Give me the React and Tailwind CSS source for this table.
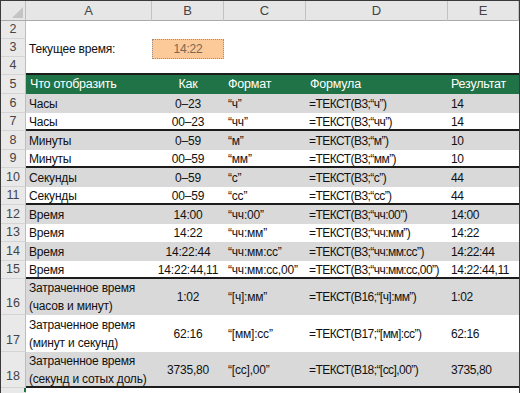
import React from "react";

const grid = "grid grid-cols-[126px_72px_82px_142px_71px]";

const rows = [
  { n: 6, a: "Часы", b: "0–23", c: "“ч”", d: "=ТЕКСТ(B3;“ч”)", e: "14", gray: true },
  { n: 7, a: "Часы", b: "00–23", c: "“чч”", d: "=ТЕКСТ(B3;“чч”)", e: "14", thick: true },
  { n: 8, a: "Минуты", b: "0–59", c: "“м”", d: "=ТЕКСТ(B3;“м”)", e: "10", gray: true },
  { n: 9, a: "Минуты", b: "00–59", c: "“мм”", d: "=ТЕКСТ(B3;“мм”)", e: "10", thick: true },
  { n: 10, a: "Секунды", b: "0–59", c: "“с”", d: "=ТЕКСТ(B3;“с”)", e: "44", gray: true },
  { n: 11, a: "Секунды", b: "00–59", c: "“сс”", d: "=ТЕКСТ(B3;“сс”)", e: "44", thick: true },
  { n: 12, a: "Время", b: "14:00", c: "“чч:00”", d: "=ТЕКСТ(B3;“чч:00”)", e: "14:00", gray: true },
  { n: 13, a: "Время", b: "14:22", c: "“чч:мм”", d: "=ТЕКСТ(B3;“чч:мм”)", e: "14:22" },
  { n: 14, a: "Время", b: "14:22:44", c: "“чч:мм:сс”", d: "=ТЕКСТ(B3;“чч:мм:сс”)", e: "14:22:44", gray: true },
  { n: 15, a: "Время", b: "14:22:44,11", c: "“чч:мм:сс,00”", d: "=ТЕКСТ(B3;“чч:мм:сс,00”)", e: "14:22:44,11", thick: true },
];

const tallRows = [
  { n: 16, a1: "Затраченное время", a2: "(часов и минут)", b: "1:02", c: "“[ч]:мм”", d: "=ТЕКСТ(B16;“[ч]:мм”)", e: "1:02", gray: true, h: "h-[36px]" },
  { n: 17, a1: "Затраченное время", a2: "(минут и секунд)", b: "62:16", c: "“[мм]:сс”", d: "=ТЕКСТ(B17;“[мм]:сс”)", e: "62:16", h: "h-[37px]" },
  { n: 18, a1: "Затраченное время", a2: "(секунд и сотых доль)", b: "3735,80", c: "“[сс],00”", d: "=ТЕКСТ(B18;“[сс],00”)", e: "3735,80", gray: true, thick: true, h: "h-[36px]" },
];

function RowNum({ n, bottom }) {
  return (
    <div
      className={
        "w-[25px] shrink-0 bg-[#e9e9e9] border-r border-r-[#bdbdbd] border-b border-b-[#d4d4d4] flex justify-center text-[12.5px] text-[#444] tracking-normal " +
        (bottom ? "items-end pb-[1px]" : "items-center")
      }
    >
      {n}
    </div>
  );
}

export default function App() {
  return (
    <div className="w-[520px] h-[393px] overflow-hidden bg-white border-l border-t border-r border-[#3a3a3a] font-['Liberation_Sans',Arial,sans-serif] text-[12px] tracking-[-0.2px] text-[#111] flex flex-col">
      {/* column letters */}
      <div className="flex h-[20px] shrink-0 bg-[#e6e6e6] border-b border-[#ababab]">
        <div className="w-[25px] shrink-0 border-r border-[#bdbdbd] relative">
          <svg className="absolute right-[2px] bottom-[2px]" width="11" height="11" viewBox="0 0 11 11">
            <polygon points="11,0 11,11 0,11" fill="#c4c4c4" />
          </svg>
        </div>
        <div className={grid + " text-[13px] text-[#444] tracking-normal"}>
          {["A", "B", "C", "D", "E"].map((l) => (
            <div key={l} className="border-r border-[#c2c2c2] flex items-center justify-center">
              {l}
            </div>
          ))}
        </div>
      </div>

      {/* row 2 */}
      <div className="flex h-[18px] shrink-0">
        <RowNum n={2} />
        <div className="flex-1" />
      </div>
      {/* row 3 */}
      <div className="flex h-[18px] shrink-0">
        <RowNum n={3} />
        <div className={grid}>
          <div className="pl-[3px] flex items-center">Текущее время:</div>
          <div className="bg-[#fcca98] border border-dotted border-[#8f8f8f] flex items-center justify-center text-[#7d6652]">
            14:22
          </div>
        </div>
      </div>
      {/* row 4 */}
      <div className="flex h-[18px] shrink-0">
        <RowNum n={4} />
        <div className="flex-1 border-b-2 border-[#1c1c1c]" />
      </div>
      {/* row 5 header */}
      <div className="flex h-[19px] shrink-0">
        <RowNum n={5} />
        <div className={grid + " bg-[#207346] text-white text-[12.5px]"}>
          <div className="pl-[4px] flex items-center">Что отобразить</div>
          <div className="flex items-center justify-center">Как</div>
          <div className="pl-[4px] flex items-center">Формат</div>
          <div className="pl-[4px] flex items-center">Формула</div>
          <div className="pl-[3px] flex items-center">Результат</div>
        </div>
      </div>

      {rows.map((r, i) => (
        <div key={r.n} className={"flex shrink-0 " + (i % 2 === 0 ? "h-[19px]" : "h-[18px]")}>
          <RowNum n={r.n} />
          <div
            className={
              grid +
              (r.gray ? " bg-[#d9d9d9]" : " bg-white") +
              (r.thick ? " border-b-2 border-[#1c1c1c]" : "")
            }
          >
            <div className="pl-[3px] flex items-center">{r.a}</div>
            <div className="flex items-center justify-center whitespace-nowrap">{r.b}</div>
            <div className="pl-[4px] flex items-center whitespace-nowrap">{r.c}</div>
            <div className="pl-[3px] flex items-center whitespace-nowrap tracking-[-0.55px]">{r.d}</div>
            <div className="pl-[3px] flex items-center whitespace-nowrap tracking-[-0.4px]">{r.e}</div>
          </div>
        </div>
      ))}

      {tallRows.map((r) => (
        <div key={r.n} className={"flex shrink-0 " + r.h}>
          <RowNum n={r.n} bottom />
          <div
            className={
              grid +
              (r.gray ? " bg-[#d9d9d9]" : " bg-white") +
              (r.thick ? " border-b-2 border-[#1c1c1c]" : "")
            }
          >
            <div className="pl-[3px] flex flex-col justify-center leading-[18px] whitespace-nowrap">
              <span>{r.a1}</span>
              <span>{r.a2}</span>
            </div>
            <div className="flex items-center justify-center">{r.b}</div>
            <div className="pl-[4px] flex items-center">{r.c}</div>
            <div className="pl-[3px] flex items-center tracking-[-0.55px]">{r.d}</div>
            <div className="pl-[3px] flex items-center tracking-[-0.4px]">{r.e}</div>
          </div>
        </div>
      ))}

      {/* partial row 19 */}
      <div className="flex flex-1">
        <div className="w-[25px] shrink-0 bg-[#e9e9e9] border-r border-r-[#bdbdbd] relative">
          <div className="absolute right-[-1px] top-0 w-[2px] h-[4px] bg-[#217346]" />
        </div>
        <div className="flex-1" />
      </div>
    </div>
  );
}
